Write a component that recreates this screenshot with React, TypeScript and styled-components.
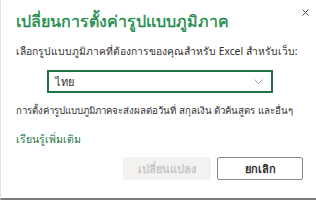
import styled, { createGlobalStyle } from 'styled-components';

const GlobalStyle = createGlobalStyle`
    html, body {
        margin: 0;
        padding: 0;
        background: #ffffff;
    }
    body {
        font-family: "Segoe UI", "Noto Sans", "DejaVu Sans", sans-serif;
    }
`;

const Dialog = styled.div`
    width: 316px;
    height: 200px;
    box-sizing: border-box;
    background: #ffffff;
    border-left: 1px solid #e3e3e3;
    border-bottom: 2px solid #7c7c7c;
    padding: 0 13px 0 15px;
    display: flex;
    flex-direction: column;
    color: #323130;
    overflow: hidden;
`;

const Header = styled.div`
    display: flex;
    justify-content: space-between;
    align-items: flex-start;
    height: 43px;
    flex-shrink: 0;
`;

const Title = styled.h1`
    margin: 9px 0 0;
    font-size: 16px;
    line-height: 24px;
    font-weight: 400;
    color: #1a8c49;
    -webkit-text-stroke: 0.4px #1a8c49;
    white-space: nowrap;
`;

const CloseButton = styled.button`
    margin: 6px -8px 0 0;
    padding: 0;
    width: 12px;
    height: 12px;
    border: none;
    background: none;
    display: flex;
    align-items: center;
    justify-content: center;
    cursor: pointer;
`;

const Text = styled.p<{ $size: number }>`
    margin: 0;
    font-size: ${(p) => p.$size}px;
    line-height: 16px;
    height: 16px;
    white-space: nowrap;
    color: #323130;
`;

const Select = styled.div`
    margin: 11px 0 10px 31px;
    width: 226px;
    height: 23px;
    flex-shrink: 0;
    box-sizing: border-box;
    border: 2px solid #217346;
    display: flex;
    align-items: center;
    justify-content: space-between;
    padding: 0 8px 0 6px;
    font-size: 11px;
    color: #323130;
`;

const Link = styled.a`
    margin-top: 13px;
    font-size: 10.5px;
    line-height: 14px;
    height: 14px;
    color: #1e7a43;
    text-decoration: none;
    white-space: nowrap;
    align-self: flex-start;
`;

const Footer = styled.div`
    margin-top: 11px;
    display: flex;
    justify-content: flex-end;
    gap: 6px;
`;

const Button = styled.button<{ $primary?: boolean }>`
    height: 23px;
    box-sizing: border-box;
    font-family: inherit;
    font-size: 11px;
    line-height: 1;
    font-weight: 600;
    border-radius: 2px;
    padding: 0;
    width: ${(p) => (p.$primary ? '88px' : '86px')};
    background: ${(p) => (p.$primary ? '#f3f2f1' : '#ffffff')};
    color: ${(p) => (p.$primary ? '#c8c6c4' : '#323130')};
    border: ${(p) => (p.$primary ? 'none' : '1px solid #8a8886')};
`;

export default function App() {
    return (
        <>
            <GlobalStyle />
            <Dialog>
                <Header>
                    <Title>เปลี่ยนการตั้งค่ารูปแบบภูมิภาค</Title>
                    <CloseButton aria-label="ปิด">
                        <svg width="7" height="7" viewBox="0 0 7 7">
                            <path d="M0.5 0.5 L6.5 6.5 M6.5 0.5 L0.5 6.5" stroke="#555" strokeWidth="1" />
                        </svg>
                    </CloseButton>
                </Header>
                <Text $size={10.3}>เลือกรูปแบบภูมิภาคที่ต้องการของคุณสำหรับ Excel สำหรับเว็บ:</Text>
                <Select>
                    <span>ไทย</span>
                    <svg width="9" height="5" viewBox="0 0 9 5">
                        <path d="M0.5 0.5 L4.5 4.5 L8.5 0.5" stroke="#a6a6a6" strokeWidth="1" fill="none" />
                    </svg>
                </Select>
                <Text $size={9.7}>การตั้งค่ารูปแบบภูมิภาคจะส่งผลต่อวันที่ สกุลเงิน ตัวค้นสูตร และอื่นๆ</Text>
                <Link href="#">เรียนรู้เพิ่มเติม</Link>
                <Footer>
                    <Button $primary disabled>เปลี่ยนแปลง</Button>
                    <Button>ยกเลิก</Button>
                </Footer>
            </Dialog>
        </>
    );
}
